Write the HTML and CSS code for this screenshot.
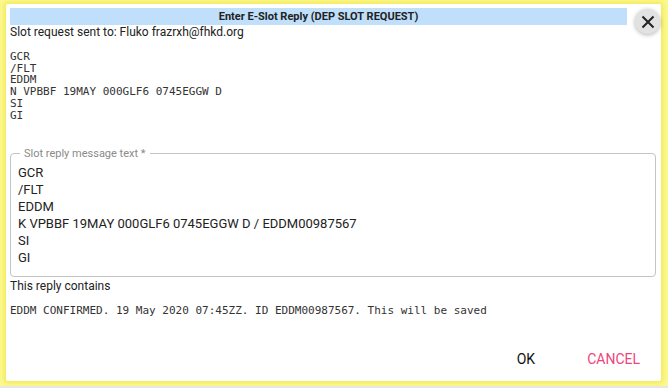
FILE: index.html
```html
<!DOCTYPE html>
<html>
<head>
	<meta charset="UTF-8">
	<title>Enter E-Slot Reply</title>
	<link rel="stylesheet" href="styles.css">
</head>
<body>
	<div class="dialog">
		<div class="title">Enter E-Slot Reply (DEP SLOT REQUEST)</div>
		<button class="close" title="Close">
			<svg width="14" height="14" viewBox="0 0 14 14"><path d="M1.5 1.5L12.5 12.5M12.5 1.5L1.5 12.5" stroke="#222" stroke-width="2" fill="none"/></svg>
		</button>
		<div class="sent">Slot request sent to: Fluko frazrxh@fhkd.org</div>
		<pre class="request">GCR
/FLT
EDDM
N VPBBF 19MAY 000GLF6 0745EGGW D
SI
GI</pre>
		<fieldset class="reply">
			<legend>Slot reply message text *</legend>
			<div class="lines">
				<div>GCR</div>
				<div>/FLT</div>
				<div>EDDM</div>
				<div>K VPBBF 19MAY 000GLF6 0745EGGW D / EDDM00987567</div>
				<div>SI</div>
				<div>GI</div>
			</div>
		</fieldset>
		<div class="contains">This reply contains</div>
		<pre class="summary">EDDM CONFIRMED. 19 May 2020 07:45ZZ. ID EDDM00987567. This will be saved</pre>
		<div class="actions">
			<button class="btn">OK</button>
			<button class="btn cancel">CANCEL</button>
		</div>
	</div>
</body>
</html>
```

FILE: styles.css
```css
html{
	background: #e6e6e6;
}
body{
	margin: 0;
	height: 386px;
	background: #fbf88e;
	padding: 4px 0 0 6px;
	box-sizing: border-box;
	font-family: Roboto, "Liberation Sans", sans-serif;
}
.dialog{
	position: relative;
	width: 655px;
	height: 377px;
	background: #fff;
	box-sizing: border-box;
	padding: 4px;
	box-shadow: 0 0 4px 2px #f2ea5a;
	border-radius: 2px;
	display: flex;
	flex-direction: column;
}
.title{
	width: 617px;
	height: 17px;
	line-height: 17px;
	background: #bfdffa;
	text-align: center;
	font-size: 11px;
	font-weight: bold;
	color: #222;
}
.close{
	position: absolute;
	left: 629px;
	top: 5px;
	width: 25px;
	height: 25px;
	border-radius: 50%;
	border: 0;
	padding: 0;
	background: #e2e2e2;
	box-shadow: 0 1px 4px rgba(0,0,0,0.3);
	display: flex;
	align-items: center;
	justify-content: center;
}
.sent{
	font-size: 12px;
	color: #222;
	line-height: 14px;
}
.request, .summary{
	font-family: "DejaVu Sans Mono", monospace;
	font-size: 11px;
	line-height: 11.7px;
	color: #333;
	margin: 0;
}
.request{
	margin-top: 12px;
}
.reply{
	margin: 26px 1px 0 0;
	border: 1px solid #c4c4c4;
	border-radius: 4px;
	padding: 4px 7px 3px 7px;
	height: 130px;
	box-sizing: border-box;
}
.reply legend{
	font-size: 11px;
	color: #8a8a8a;
	padding: 0 4px;
	margin-left: 2px;
}
.lines{
	font-size: 13px;
	line-height: 17px;
	color: #222;
}
.contains{
	font-size: 12px;
	color: #222;
	margin-top: 2px;
}
.summary{
	margin-top: 12px;
}
.actions{
	margin-top: auto;
	display: flex;
	justify-content: flex-end;
	gap: 36px;
	padding: 0 9px 6px 0;
}
.btn{
	border: 0;
	background: none;
	font-family: Roboto, "Liberation Sans", sans-serif;
	font-size: 14px;
	color: #111;
	padding: 4px 8px;
}
.cancel{
	color: #f0447b;
}
```
